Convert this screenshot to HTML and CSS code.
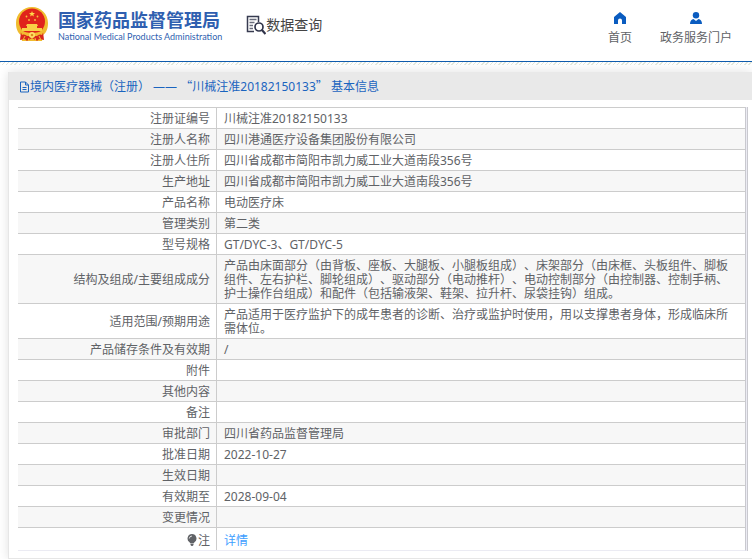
FILE: index.html
```html
<!DOCTYPE html>
<html lang="zh-CN">
<head>
<meta charset="utf-8">
<meta name="viewport" content="width=device-width, initial-scale=1">
<title>数据查询 - 国家药品监督管理局</title>
<link rel="stylesheet" href="styles.css">
</head>
<body>
<header class="site-header">
  <a class="brand" href="#">
    <svg class="emblem" viewBox="0 0 34 36" aria-hidden="true">
      <path d="M17 1C8 1 1 8 1 17c0 6 2 10 5 12l1 6h20l1-6c3-2 5-6 5-12C33 8 26 1 17 1z" fill="#f0bc2e"/>
      <path d="M6 26l-1 8 5-1 2 2 5-3 5 3 2-2 5 1-1-8-6 4H12z" fill="#d8271c"/>
      <circle cx="17" cy="15.500" r="13" fill="#e0231b"/>
      <path d="M17 5l.8 2h2.200l-1.700 1.400.6 2.100-1.900-1.200-1.900 1.200.6-2.100L14 7h2.200z" fill="#ffd84a"/>
      <g fill="#f6c23f"><circle cx="11.500" cy="10.500" r=".9"/><circle cx="22.500" cy="10.500" r=".9"/><circle cx="14" cy="14" r=".9"/><circle cx="20" cy="14" r=".9"/></g>
      <path d="M12 18h10l1 2h-1v2h5v3H7v-3h5v-2h-1z" fill="#f9cf45"/>
      <path d="M5 24c4 2 8 3 12 3s8-1 12-3l-2 5c-3-1-5 0-7 1l-3 2-3-2c-2-1-4-2-7-1z" fill="#f3bd32"/>
      <circle cx="17" cy="29" r="3" fill="#ffe069"/><circle cx="17" cy="29" r="1.300" fill="#dc8d20"/>
      <path d="M10 30l-2 4M24 30l2 4M14 32l-1 3M20 32l1 3" stroke="#f3bd32"/>
    </svg>
    <span class="brand-text">
      <span class="brand-name">国家药品监督管理局</span>
      <span class="brand-en">National Medical Products Administration</span>
    </span>
  </a>
  <a class="section" href="#">
    <svg class="section-icon" viewBox="0 0 20 20" aria-hidden="true">
      <path d="M8 16.500H1.500V1.500h11V7" fill="none" stroke="#373b50" stroke-width="1.500"/>
      <path d="M3.500 4.500h7M3.500 7.500h5M3.500 10.500h3.500M3.500 13.500h3.500" stroke="#6a6d7c" stroke-width="1.300"/>
      <circle cx="13" cy="12" r="4" fill="#fff" stroke="#30344a" stroke-width="1.700"/>
      <path d="M16 15l3.500 4" stroke="#30344a" stroke-width="2.200"/>
    </svg>
    <span>数据查询</span>
  </a>
  <nav class="nav">
    <a href="#">
      <svg viewBox="0 0 12 12" aria-hidden="true"><path d="M6 0l6 5v7H8V8.500a2 2 0 0 0-4 0V12H0V5z" fill="#0a5cc0"/></svg>
      <span>首页</span>
    </a>
    <a href="#">
      <svg viewBox="0 0 12 12" aria-hidden="true"><circle cx="6" cy="3.300" r="3.200" fill="#0a5cc0"/><path d="M0 12c0-3 1.500-4.700 3.500-5L6 9l2.500-2C10.500 7.300 12 9 12 12z" fill="#0a5cc0"/></svg>
      <span>政务服务门户</span>
    </a>
  </nav>
</header>
<div class="hatch"></div>
<main class="panel">
  <h1 class="panel-title">
    <svg viewBox="0 0 11 12" aria-hidden="true"><path d="M1.500 1h5l3 3v7h-8zM6.500 1v3h3M3.500 6.500h4M3.500 8.500h4" fill="none" stroke="#1a64bf"/></svg>
    <span>境内医疗器械（注册） —— <span class="quote">“</span>川械注准20182150133<span class="quote">”</span> 基本信息</span>
  </h1>
  <div class="table-wrap">
    <table class="info">
      <tbody>
        <tr><th scope="row">注册证编号</th><td>川械注准20182150133</td></tr>
        <tr><th scope="row">注册人名称</th><td>四川港通医疗设备集团股份有限公司</td></tr>
        <tr><th scope="row">注册人住所</th><td>四川省成都市简阳市凯力威工业大道南段356号</td></tr>
        <tr><th scope="row">生产地址</th><td>四川省成都市简阳市凯力威工业大道南段356号</td></tr>
        <tr><th scope="row">产品名称</th><td>电动医疗床</td></tr>
        <tr><th scope="row">管理类别</th><td>第二类</td></tr>
        <tr><th scope="row">型号规格</th><td>GT/DYC-3、GT/DYC-5</td></tr>
        <tr><th scope="row">结构及组成/主要组成成分</th><td>产品由床面部分（由背板、座板、大腿板、小腿板组成）、床架部分（由床框、头板组件、脚板组件、左右护栏、脚轮组成）、驱动部分（电动推杆）、电动控制部分（由控制器、控制手柄、护士操作台组成）和配件（包括输液架、鞋架、拉升杆、尿袋挂钩）组成。</td></tr>
        <tr><th scope="row">适用范围/预期用途</th><td>产品适用于医疗监护下的成年患者的诊断、治疗或监护时使用，用以支撑患者身体，形成临床所需体位。</td></tr>
        <tr><th scope="row">产品储存条件及有效期</th><td>/</td></tr>
        <tr><th scope="row">附件</th><td></td></tr>
        <tr><th scope="row">其他内容</th><td></td></tr>
        <tr><th scope="row">备注</th><td></td></tr>
        <tr><th scope="row">审批部门</th><td>四川省药品监督管理局</td></tr>
        <tr><th scope="row">批准日期</th><td>2022-10-27</td></tr>
        <tr><th scope="row">生效日期</th><td></td></tr>
        <tr><th scope="row">有效期至</th><td>2028-09-04</td></tr>
        <tr><th scope="row">变更情况</th><td></td></tr>
        <tr class="note"><th scope="row"><svg viewBox="0 0 10 12" aria-hidden="true"><path d="M5 0a4.500 4.500 0 0 0-2.500 8.200L3.500 9.500h3l1-1.300A4.500 4.500 0 0 0 5 0zM3.500 10h3v1l-1 1h-1l-1-1z" fill="#606266"/><path d="M2.300 4.500A2.700 2.700 0 0 1 5 2" fill="none" stroke="#fff" stroke-width=".8"/></svg>注</th><td><a href="#">详情</a></td></tr>
      </tbody>
    </table>
  </div>
</main>
</body>
</html>
```
FILE: styles.css
```css
* {
  box-sizing: border-box;
}

body {
  margin: 0;
  background: #fff;
  color: #606266;
  font-family: "Noto Sans", "Noto Sans CJK SC", sans-serif;
  font-size: 12px;
  line-height: 14px;
  text-spacing-trim: space-all;
}

a {
  color: inherit;
  text-decoration: none;
}

svg {
  display: block;
}

.site-header {
  display: flex;
  align-items: flex-start;
  padding: 0 20px 0 15px;
  height: 62px;
  border-bottom: 1px solid #0f5bad;
}

.brand {
  display: flex;
  gap: 9px;
  padding-top: 6px;
}

.emblem {
  width: 34px;
  height: 36px;
}

.brand-text {
  display: flex;
  flex-direction: column;
  padding-top: 3px;
  color: #2f5fb0;
  white-space: nowrap;
}

.brand-name {
  font-family: "Noto Sans CJK SC", sans-serif;
  font-size: 18px;
  font-weight: 700;
  line-height: 20px;
}

.brand-en {
  font-family: Lato, sans-serif;
  font-size: 9px;
  font-weight: 400;
  line-height: 16px;
}

.section {
  display: flex;
  align-items: center;
  margin-left: 24px;
  padding-top: 15px;
  color: #444;
  font-size: 14px;
  line-height: 20px;
}

.section-icon {
  width: 20px;
  height: 20px;
}

.nav {
  display: flex;
  gap: 28px;
  margin-left: auto;
  padding-top: 12px;
}

.nav a {
  display: flex;
  flex-direction: column;
  align-items: center;
  gap: 7px;
}

.nav svg {
  width: 12px;
  height: 12px;
}

.hatch {
  height: 3px;
  background: repeating-linear-gradient(135deg, #e3e9dd 0 1px, #fff 1px 3px);
}

.panel {
  margin: 7px 0 0 8px;
  border: 1px solid #e6e6e6;
  border-width: 0 0 1px 1px;
  box-shadow: 0 0 10px rgba(0, 0, 0, 0.12);
}

.panel-title {
  display: flex;
  align-items: center;
  margin: 0;
  padding: 1px 10px 0;
  height: 28px;
  background: #e9e9e9;
  color: #1a64bf;
  font-size: 12px;
  font-weight: 400;
}

.panel-title svg {
  width: 11px;
  height: 12px;
}

.quote {
  font-family: "Noto Sans CJK SC", sans-serif;
}

.table-wrap {
  margin: 7px 4px 7px 9px;
  padding-right: 1px;
  border-right: 1px solid #c9c9cf;
  background: #ebebf3;
}

.info {
  width: 100%;
  border-collapse: separate;
  border-spacing: 0;
  border-right: 1px solid #c9c9cf;
  border-bottom: 1px solid #ebebf3;
  background: #fff;
}

.info th,
.info td {
  height: 21px;
  padding: 4px 6px 2px;
  border-top: 1px solid #ccc;
  font-weight: 400;
  vertical-align: middle;
}

.info th {
  width: 199px;
  border-right: 1px solid #ccc;
  text-align: right;
}

.info td {
  padding-left: 7px;
  text-align: left;
}

.info tr:nth-child(even) {
  background: #f7f7f7;
}

.info .note th,
.info .note td {
  height: 23px;
  padding-top: 6px;
}

.note svg {
  display: inline-block;
  width: 10px;
  height: 12px;
  margin-right: 1px;
  vertical-align: -1px;
}

.note a {
  color: #409eff;
}
```
